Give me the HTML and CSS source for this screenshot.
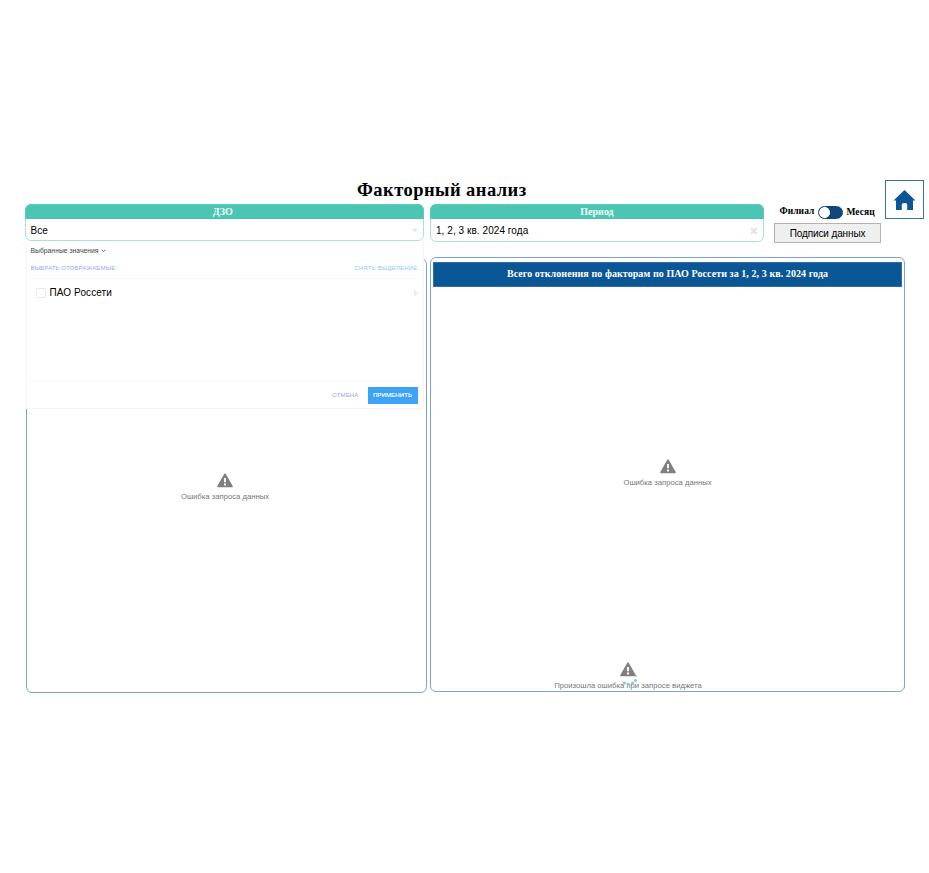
FILE: index.html
```html
<!DOCTYPE html>
<html lang="ru">
<head>
<meta charset="utf-8">
<title>Факторный анализ</title>
<link rel="stylesheet" href="styles.css">
</head>
<body>
<header class="top">
  <h1 class="title"><span>Факторный анализ</span></h1>
  <section class="filter filter-dzo">
    <h2 class="filter-head head-dzo">ДЗО</h2>
    <div class="filter-value"><span class="value-all">Все</span><i class="caret-down"></i></div>
    <div class="dropdown">
      <div class="selected"><span>Выбранные значения</span><svg width="5" height="4" viewBox="0 0 5 4"><path d="M.7.8 2.5 2.700 4.300.8" fill="none" stroke="#555" stroke-width=".9"/></svg></div>
      <div class="links"><span class="pick">ВЫБРАТЬ ОТОБРАЖАЕМЫЕ</span><span class="unpick">СНЯТЬ ВЫДЕЛЕНИЕ</span></div>
      <div class="options"><div class="option"><i class="checkbox"></i><span>ПАО Россети</span><i class="caret-right"></i></div></div>
      <div class="actions"><span class="cancel">ОТМЕНА</span><span class="apply"><span>ПРИМЕНИТЬ</span></span></div>
    </div>
  </section>
  <section class="filter filter-period">
    <h2 class="filter-head">Период</h2>
    <div class="filter-value"><span class="value-period">1, 2, 3 кв. 2024 года</span><svg class="clear" width="8" height="8" viewBox="0 0 8 8"><path d="M1 1l6 6M7 1 1 7" stroke="#e4e4e4" stroke-width="2.3"/></svg></div>
  </section>
  <div class="controls">
    <div class="toggle-row"><span class="branch">Филиал</span><i class="switch"></i><span class="month">Месяц</span></div>
    <button class="labels"><span>Подписи данных</span></button>
  </div>
  <a class="home"><svg width="23" height="22" viewBox="0 0 23 22"><path d="M11.500 1 .5 11.500H3V21h5.800v-5q0-2 2-2h1.400q2 0 2 2v5H20v-9.500h2.500z" fill="#0b5796"/></svg></a>
</header>
<main class="panels">
  <section class="panel panel-left">
    <div class="error"><svg width="16" height="15" viewBox="0 0 16 15"><path d="M8 1.200 15 13.500H1z" fill="#808080" stroke="#808080" stroke-width="1.600" stroke-linejoin="round"/><path d="M8 5v4.200M8 10.600v1.900" stroke="#fff" stroke-width="1.900"/></svg><span class="error-data">Ошибка запроса данных</span></div>
  </section>
  <section class="panel panel-right">
    <h2 class="panel-head"><span>Всего отклонения по факторам по ПАО Россети за 1, 2, 3 кв. 2024 года</span></h2>
    <div class="error"><svg width="16" height="15" viewBox="0 0 16 15"><path d="M8 1.200 15 13.500H1z" fill="#808080" stroke="#808080" stroke-width="1.600" stroke-linejoin="round"/><path d="M8 5v4.200M8 10.600v1.900" stroke="#fff" stroke-width="1.900"/></svg><span class="error-data">Ошибка запроса данных</span></div>
    <div class="error error-bottom"><svg width="16" height="15" viewBox="0 0 16 15"><path d="M8 1.200 15 13.500H1z" fill="#808080" stroke="#808080" stroke-width="1.600" stroke-linejoin="round"/><path d="M8 5v4.200M8 10.600v1.900" stroke="#fff" stroke-width="1.900"/></svg><span class="error-widget">Произошла ошибка при запросе виджета</span>
      <svg class="spinner" width="18" height="14" viewBox="0 0 18 14"><g fill="#8fc3d8"><circle cx="14.500" cy="2" r="1.200" opacity=".5"/><circle cx="13.500" cy="6.500" r="1.500"/><circle cx="10.500" cy="9" r="1.500"/><circle cx="6" cy="10" r="1.500"/><circle cx="2.500" cy="9" r="1.500"/></g></svg>
    </div>
  </section>
</main>
</body>
</html>
```
FILE: styles.css
```css
* { box-sizing: border-box; }
body { margin: 0; width: 929px; height: 873px; overflow: hidden; background: #fff; color: #000; font-family: "Liberation Sans", Arial, sans-serif; }
h1, h2 { margin: 0; font-family: "Liberation Serif", "Times New Roman", serif; font-weight: bold; }
span { white-space: nowrap; }
i { display: block; flex: none; }
svg { display: block; flex: none; }

.top { display: grid; grid-template-columns: 400px 334px 107px 39px; grid-template-rows: 24px 38px; column-gap: 6px; margin-left: 24px; padding-top: 180px; }
.title { grid-column: 1 / 4; padding-left: 333px; font-size: 18.5px; line-height: 20px; letter-spacing: .45px; }

.filter { grid-row: 2; height: 38px; border: 1px solid #a9e2d6; border-radius: 6px; }
.filter-dzo { grid-column: 1; position: relative; height: 37px; margin-left: .5px; }
.filter-period { grid-column: 2; }
.filter-head { height: 15px; margin: -1px -1px 0; border: 1px solid #5cccb9; border-bottom: 0; border-radius: 6px 6px 0 0; background: #4bc6b3; color: #f4fffc; font-size: 10px; line-height: 14px; text-align: center; }
.head-dzo { padding-right: 3px; }
.filter-value { display: flex; align-items: center; justify-content: space-between; height: 23px; padding: 0 5px; font-size: 10px; letter-spacing: .06px; }
.caret-down { border: 3.500px solid transparent; border-top-color: #e2e2e2; border-bottom: 0; }

.dropdown { position: absolute; z-index: 2; left: 0; top: 36px; width: 398px; height: 168px; padding: 0 5px 0 4px; border: 1px solid #f5f5f5; border-top: 0; background: #fff; }
.selected { display: flex; align-items: center; gap: 2px; height: 19px; color: #444; font-size: 6.800px; }
.links { display: flex; justify-content: space-between; height: 19px; padding-top: 4px; border-bottom: 1px solid #fafafa; font-size: 6px; line-height: 9px; }
.pick { color: #91aaff; letter-spacing: .15px; }
.unpick { color: #91c8f6; letter-spacing: .2px; }
.options { height: 103px; border-bottom: 1px solid #f7f7f7; }
.option { display: flex; align-items: center; height: 27px; padding-left: 5px; font-size: 10px; letter-spacing: .1px; }
.checkbox { width: 10px; height: 10px; margin-right: 4px; border: 1px solid #e9e9e9; border-radius: 2px; }
.caret-right { margin-left: auto; border: 4px solid transparent; border-left-color: #ebebeb; border-right: 0; }
.actions { display: flex; align-items: center; justify-content: flex-end; gap: 9px; height: 26px; font-size: 6px; }
.cancel { color: #9da1ee; letter-spacing: .15px; }
.apply { display: flex; align-items: center; justify-content: center; width: 50px; height: 17px; background: #3ea2f7; color: #fff; letter-spacing: .15px; -webkit-text-stroke: .15px #fff; }

.controls { grid-column: 3; grid-row: 2; margin-left: 4px; margin-right: -4px; }
.toggle-row { display: flex; align-items: center; height: 15px; padding-left: 5.500px; font: bold 9.500px "Liberation Serif", serif; }
.branch { margin-top: -2px; letter-spacing: .05px; }
.month { letter-spacing: .1px; }
.switch { width: 25px; height: 13px; margin: 1px 3px 0 4px; border: 1px solid #104779; border-radius: 7px; background: radial-gradient(circle at 5.500px 5.500px, #fff 5.200px, #104779 5.800px); }
.labels { display: block; width: 107px; height: 20px; margin-top: 4px; padding: 0; border: 1px solid #b2b2b2; background: #efefef; color: #000; font: 10px "Liberation Sans", Arial, sans-serif; letter-spacing: -.12px; }
.home { grid-column: 4; grid-row: 1 / 3; display: flex; align-items: center; justify-content: center; width: 39px; height: 39px; margin-left: 2px; border: 1px solid #3673a8; }

.panels { display: flex; align-items: flex-start; gap: 4px; margin: 15px 0 0 26px; }
.panel { border: 1px solid #7ba5c9; border-radius: 6px; }
.panel-left { width: 401px; height: 435px; margin-top: 1px; padding-top: 214px; }
.panel-right { width: 475px; height: 435px; margin-left: -1px; padding: 4px 2px; }
.panel-head { height: 25px; border: 1px solid #306fa5; background: #0b5796; color: #fff; font-size: 10px; line-height: 22px; letter-spacing: .075px; text-align: center; }
.error { position: relative; display: flex; flex-direction: column; align-items: center; gap: 4px; color: #777; font-size: 7.700px; line-height: 10px; }
.panel-left .error { padding-right: 3px; }
.panel-right .error { margin-top: 172px; }
.panel-right .error-bottom { margin-top: 174px; padding-right: 79px; }
.spinner { position: absolute; left: 189px; top: 12px; }
```
